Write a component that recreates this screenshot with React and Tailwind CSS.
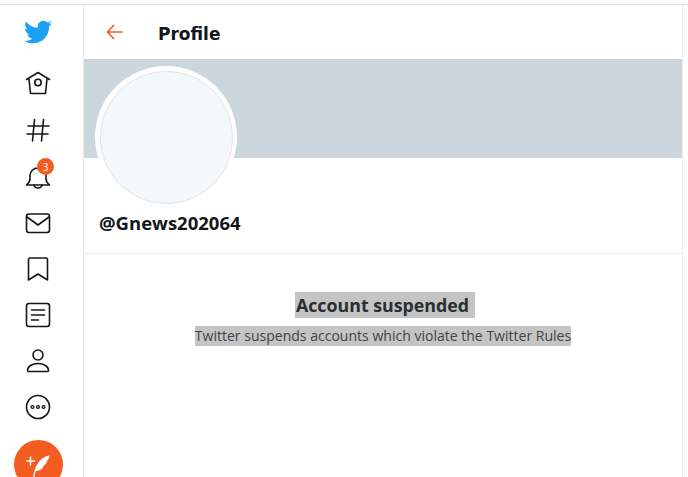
import React from "react";
import { FaTwitter } from "react-icons/fa";

const stroke = "#14171a";

function NavIcon({ children }) {
  return (
    <svg width="26" height="26" viewBox="0 0 26 26" fill="none" stroke={stroke} strokeWidth="1.6" strokeLinecap="round" strokeLinejoin="round">
      {children}
    </svg>
  );
}

function Feather() {
  return (
    <svg width="26" height="26" viewBox="0 0 26 26" fill="white">
      <path d="M1 9h9M5.500 4.500v9" stroke="white" strokeWidth="1.400" fill="none" />
      <path d="M8 26C9 18 12 10 18 6c2-1.500 4.500-2.500 6.500-2.500 0 2.500-1.500 4.500-3.500 6h1.500c-1.500 2.500-3.500 4.500-5.500 5.500l1.500.5c-2.500 2.500-5.500 3.500-7.500 3.500-1 2-1.500 5-1.500 7z" />
    </svg>
  );
}

function Sidebar() {
  return (
    <aside className="flex w-[84px] shrink-0 flex-col items-center border-r border-[#e6ecf0] pr-[7px]">
      <div className="flex h-[54px] items-start pt-[13px]">
        <FaTwitter className="text-[#1da1f2]" size={28} />
      </div>
      <div className="flex flex-col items-center gap-[20.2px] pt-[25px]">
        <NavIcon>
          <path d="M1.500 8.500 13 1.500l11.500 7" />
          <path d="M4 8 5.500 22.500h15L22 8" />
          <circle cx="13" cy="11.500" r="3.200" />
        </NavIcon>
        <NavIcon>
          <path d="M9.500 2.500 7.500 24M18.500 2.500l-2 21.500M3 9h21M2 17h21" />
        </NavIcon>
        <div className="relative">
          <NavIcon>
            <path d="M1.500 22c2-1.500 3.500-3 3.500-6.500v-3C5 8.500 8.500 5 13 5s8 3.500 8 7.500v3c0 3.500 1.500 5 3.500 6.500z" />
            <path d="M9 22c.3 2 2 3 4 3s3.700-1 4-3" />
          </NavIcon>
          <span className="absolute left-[12px] top-[-5px] flex h-[17px] w-[17px] items-center justify-center rounded-full bg-[#f45d22] text-[10px] leading-none text-white">
            3
          </span>
        </div>
        <NavIcon>
          <rect x="1.500" y="4" width="23" height="18.500" rx="2.500" />
          <path d="m2 7 11 8 11-8" />
        </NavIcon>
        <NavIcon>
          <path d="M3.500 3.500c0-1 .8-1.500 1.500-1.500h16c.8 0 1.500.5 1.500 1.500V24L13 18l-9.500 6z" />
        </NavIcon>
        <NavIcon>
          <rect x="1.500" y="1.500" width="23" height="23" rx="2.500" />
          <path d="M6.500 8h13M6.500 13h13M6.500 18h7" />
        </NavIcon>
        <NavIcon>
          <circle cx="13" cy="7" r="5" />
          <path d="M2.500 22.500c0-4 4.500-7 10.500-7s10.500 3 10.500 7c0 .5-.5 1-1 1h-19c-.5 0-1-.5-1-1z" />
        </NavIcon>
        <NavIcon>
          <circle cx="13" cy="13" r="11.500" />
          <circle cx="7.500" cy="13" r="1.400" strokeWidth="1.300" />
          <circle cx="13" cy="13" r="1.400" strokeWidth="1.300" />
          <circle cx="18.500" cy="13" r="1.400" strokeWidth="1.300" />
        </NavIcon>
      </div>
      <div className="mt-[20px] flex h-[49px] w-[49px] shrink-0 items-center justify-center rounded-full bg-[#f45d22]">
        <Feather />
      </div>
    </aside>
  );
}

export default function App() {
  return (
    <div className="h-[477px] w-[688px] overflow-hidden bg-white font-['Open_Sans',sans-serif]">
      <div className="h-[5px] border-b border-[#dcdfe3]" />
      <div className="flex h-[472px]">
        <Sidebar />
        <main className="flex w-[599px] flex-col border-r border-[#e6ecf0]">
          <header className="flex h-[54px] shrink-0 items-center pl-[22px]">
            <svg width="17" height="16" viewBox="0 0 17 16" fill="none" stroke="#f45d22" strokeWidth="1.700" strokeLinecap="round" strokeLinejoin="round" className="mb-[1px]">
              <path d="M16 8H1.500M7.500 1.500 1.500 8l6 6.500" />
            </svg>
            <h1 className="ml-[35px] mt-[5px] font-['DejaVu_Sans',sans-serif] text-[17px] font-bold text-[#14171a]">Profile</h1>
          </header>
          <div className="h-[99px] shrink-0 bg-[#ccd6dd]" />
          <div className="relative ml-[11px] mt-[-92px] h-[142px] w-[142px] shrink-0 rounded-full bg-white p-[4.500px]">
            <div className="h-full w-full rounded-full border border-[#e1e5e9] bg-[#f5f8fa]" />
          </div>
          <div className="flex h-[46px] shrink-0 items-start border-b border-[#e6ecf0] pl-[15px] pt-[2px]">
            <span className="text-[18.5px] font-bold leading-[26px] text-[#14171a]">@Gnews202064</span>
          </div>
          <div className="flex flex-col items-center pt-[38px]">
            <h2 className="ml-[4px] bg-[#c4c4c4] pl-[1px] pr-[6px] text-[17.800px] font-bold leading-[26px] text-[#292f33]">Account suspended</h2>
            <p className="mt-[8px] bg-[#c4c4c4] text-[14.04px] leading-[20px] text-[#3f4448]">Twitter suspends accounts which violate the Twitter Rules</p>
          </div>
        </main>
      </div>
    </div>
  );
}
